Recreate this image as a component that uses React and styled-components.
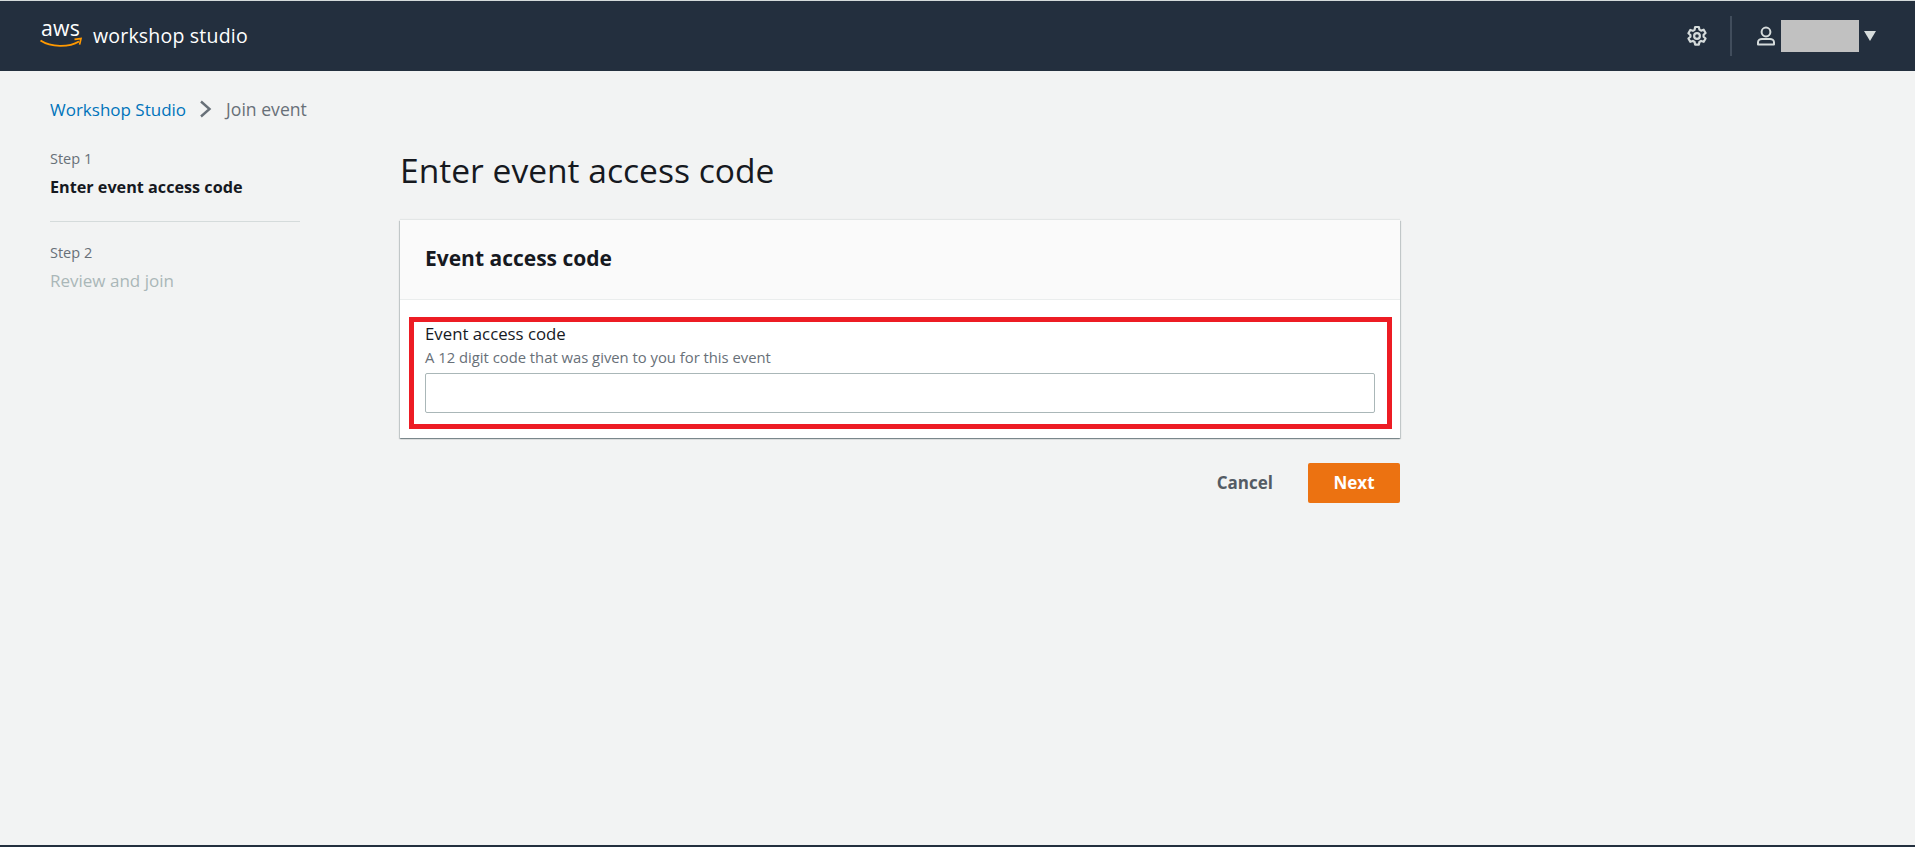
import styled, { createGlobalStyle } from "styled-components";

const GlobalStyle = createGlobalStyle`
    html, body {
        margin: 0;
        padding: 0;
        background: #f2f3f3;
        font-family: "Open Sans", "Liberation Sans", sans-serif;
    }
`

const Page = styled.div`
    height: 847px;
    box-sizing: border-box;
    border-top: 1px solid #d5dbdb;
    border-bottom: 2px solid #232f3e;
    overflow: hidden;
`

const TopBar = styled.header`
    height: 70px;
    background: #232f3e;
    display: flex;
    align-items: center;
    padding: 0 39px 0 40px;
`

const Brand = styled.div`
    display: flex;
    align-items: center;
    gap: 11px;
    flex: 1;
    color: #fff;
    font-size: 19.5px;
    letter-spacing: 0.2px;
`

const BrandName = styled.span`
    margin-bottom: 2px;
`

const LogoSvg = styled.svg`
    overflow: visible;
`

const GearButton = styled.div`
    display: flex;
    padding-right: 22px;
    margin-right: 24px;
    height: 40px;
    align-items: center;
    border-right: 2px solid #414d5c;
`

const UserBox = styled.div`
    display: flex;
    align-items: center;
`

const Redacted = styled.div`
    width: 78px;
    height: 32px;
    margin-left: 5px;
    background: #c1c1c1;
`

const Caret = styled.div`
    width: 0;
    height: 0;
    margin-left: 5px;
    border-left: 6.5px solid transparent;
    border-right: 6.5px solid transparent;
    border-top: 10px solid #d5dbdb;
`

const Body = styled.div`
    padding: 0 50px;
`

const Crumbs = styled.nav`
    display: flex;
    align-items: center;
    height: 22px;
    padding-top: 27px;
    font-size: 17px;
    color: #687078;
`

const CrumbLink = styled.a`
    color: #0073bb;
`

const CrumbSep = styled.span`
    display: flex;
    margin: 0 14px 0 13px;
`

const CrumbCurrent = styled.span`
    font-size: 17.6px;
`

const Columns = styled.div`
    display: grid;
    grid-template-columns: 250px 1000px;
    column-gap: 100px;
`

const Steps = styled.aside`
    padding-top: 28px;
`

const StepItem = styled.div`
    padding-bottom: ${props => props.last ? "0" : "23px"};
    margin-bottom: ${props => props.last ? "0" : "20px"};
    border-bottom: ${props => props.last ? "none" : "1px solid #d5dbdb"};
`

const StepNum = styled.div`
    font-size: 14.5px;
    line-height: 22px;
    color: #687078;
`

const StepName = styled.div`
    margin-top: 6px;
    font-size: ${props => props.active ? "16.2px" : "17px"};
    line-height: 22px;
    font-weight: ${props => props.active ? 700 : 400};
    color: ${props => props.active ? "#16191f" : "#aab7b8"};
`

const Main = styled.main`
    padding-top: 28px;
`

const Title = styled.h1`
    margin: 0 0 28px 0;
    font-size: 33.6px;
    line-height: 44px;
    font-weight: 400;
    color: #16191f;
`

const Card = styled.section`
    background: #fff;
    box-shadow: 0 1px 1px 0 rgba(0, 28, 36, 0.3), 1px 1px 1px 0 rgba(0, 28, 36, 0.15), -1px 1px 1px 0 rgba(0, 28, 36, 0.15), 0 -1px 1px 0 rgba(0, 28, 36, 0.06);
`

const CardHead = styled.div`
    height: 80px;
    box-sizing: border-box;
    display: flex;
    align-items: center;
    padding: 0 25px 3px;
    background: #fafafa;
    border-bottom: 1px solid #eaeded;
`

const CardTitle = styled.h2`
    margin: 0;
    font-size: 21px;
    font-weight: 700;
    color: #16191f;
`

const CardBody = styled.div`
    padding: 17px 8px 9px 9px;
`

const Marked = styled.div`
    border: 5px solid #ed1c24;
    padding: 0 12px 11px 11px;
`

const FieldLabel = styled.label`
    display: block;
    font-size: 16.8px;
    line-height: 24px;
    color: #16191f;
`

const FieldHint = styled.div`
    font-size: 14.8px;
    line-height: 22px;
    margin-bottom: 5px;
    color: #687078;
`

const TextInput = styled.input`
    display: block;
    width: 100%;
    height: 40px;
    box-sizing: border-box;
    background: #fff;
    border: 1px solid #aab7b8;
    border-radius: 2px;
`

const Actions = styled.div`
    display: flex;
    justify-content: flex-end;
    align-items: center;
    gap: 35px;
    margin-top: 25px;
`

const CancelBtn = styled.button`
    background: none;
    border: none;
    padding: 0 0 2px;
    font: 700 17px "Open Sans", sans-serif;
    color: #545b64;
`

const NextBtn = styled.button`
    width: 92px;
    height: 40px;
    padding: 0 0 2px;
    background: #ec7211;
    border: none;
    border-radius: 2px;
    font: 700 17px "Open Sans", sans-serif;
    color: #fff;
`

const AwsLogo = () => (
    <LogoSvg width="42" height="40" viewBox="0 0 42 40">
        <text x="1" y="20" fill="#fff" fontFamily="Open Sans, sans-serif" fontSize="22" textLength="39" lengthAdjust="spacingAndGlyphs">aws</text>
        <path d="M0.5 24.500C11 31.500 29 31.500 39 25.500" fill="none" stroke="#f90" strokeWidth="1.9" />
        <path d="M34.500 23.400L41 22.600L39.600 28.600" fill="none" stroke="#f90" strokeWidth="1.7" />
    </LogoSvg>
)

const GearIcon = () => (
    <svg width="22" height="22" viewBox="0 0 20 20" fill="none" stroke="#d5dbdb" strokeWidth="2" strokeLinejoin="round">
        <circle cx="10" cy="10" r="2.600" />
        <path d="M8.300 1.800h3.400l.5 2.400 1.500.9 2.400-.8 1.700 3-1.800 1.600v1.800l1.800 1.600-1.700 3-2.400-.8-1.500.9-.5 2.400H8.300l-.5-2.400-1.500-.9-2.400.8-1.700-3 1.800-1.600V9.100L2.200 7.500l1.700-3 2.400.8 1.500-.9z" />
    </svg>
)

const UserIcon = () => (
    <svg width="20" height="20" viewBox="0 0 20 20" fill="none" stroke="#d5dbdb" strokeWidth="2">
        <circle cx="10" cy="6" r="4.400" />
        <path d="M2 18.500v-2.200c0-2 2-3.300 4-3.300h8c2 0 4 1.300 4 3.300v2.200z" strokeLinejoin="round" />
    </svg>
)

const ChevronIcon = () => (
    <svg width="13" height="18" viewBox="0 0 13 18" fill="none" stroke="#687078" strokeWidth="2.400">
        <path d="M2 1.500L10.500 9L2 16.500" />
    </svg>
)

const App = () => {
    return <Page>
        <GlobalStyle />
        <TopBar>
            <Brand>
                <AwsLogo />
                <BrandName>workshop studio</BrandName>
            </Brand>
            <GearButton>
                <GearIcon />
            </GearButton>
            <UserBox>
                <UserIcon />
                <Redacted />
                <Caret />
            </UserBox>
        </TopBar>
        <Body>
            <Crumbs>
                <CrumbLink>Workshop Studio</CrumbLink>
                <CrumbSep><ChevronIcon /></CrumbSep>
                <CrumbCurrent>Join event</CrumbCurrent>
            </Crumbs>
            <Columns>
                <Steps>
                    <StepItem>
                        <StepNum>Step 1</StepNum>
                        <StepName active>Enter event access code</StepName>
                    </StepItem>
                    <StepItem last>
                        <StepNum>Step 2</StepNum>
                        <StepName>Review and join</StepName>
                    </StepItem>
                </Steps>
                <Main>
                    <Title>Enter event access code</Title>
                    <Card>
                        <CardHead>
                            <CardTitle>Event access code</CardTitle>
                        </CardHead>
                        <CardBody>
                            <Marked>
                                <FieldLabel htmlFor="code">Event access code</FieldLabel>
                                <FieldHint>A 12 digit code that was given to you for this event</FieldHint>
                                <TextInput id="code" />
                            </Marked>
                        </CardBody>
                    </Card>
                    <Actions>
                        <CancelBtn>Cancel</CancelBtn>
                        <NextBtn>Next</NextBtn>
                    </Actions>
                </Main>
            </Columns>
        </Body>
    </Page>
}

export default App
